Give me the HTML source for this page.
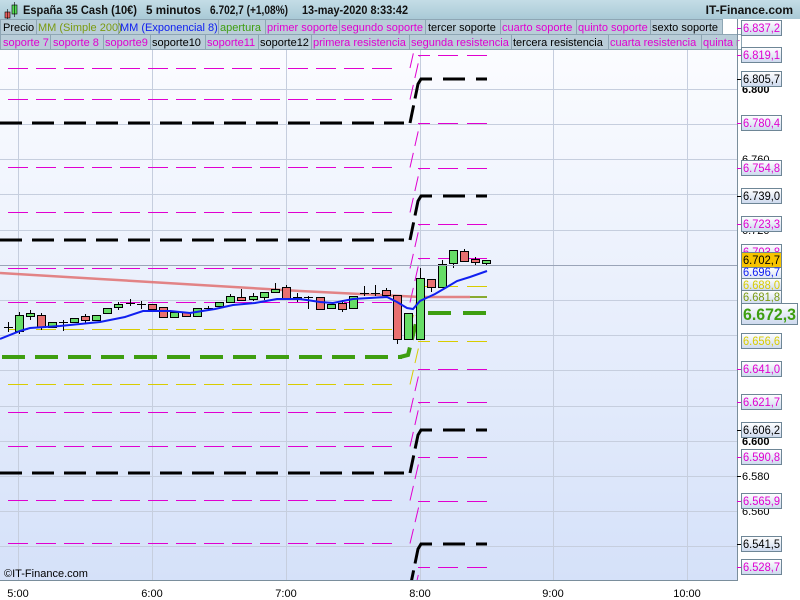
<!DOCTYPE html>
<html><head><meta charset="utf-8"><style>
html,body{margin:0;padding:0;width:800px;height:600px;overflow:hidden;background:#fff}
svg{display:block;font-family:"Liberation Sans",sans-serif}
</style></head><body>
<svg width="800" height="600" viewBox="0 0 800 600" xmlns="http://www.w3.org/2000/svg">
<defs>
<linearGradient id="bg" x1="0" y1="0" x2="0" y2="1"><stop offset="0" stop-color="#fbfcff"/><stop offset="1" stop-color="#d5e1f9"/></linearGradient>
<linearGradient id="hd" x1="0" y1="0" x2="0" y2="1"><stop offset="0" stop-color="#c4dde6"/><stop offset="1" stop-color="#a9c9d6"/></linearGradient>
<linearGradient id="bx" x1="0" y1="0" x2="0" y2="1"><stop offset="0" stop-color="#ffffff"/><stop offset="1" stop-color="#cdd9ee"/></linearGradient>
<clipPath id="pc"><rect x="0" y="50" width="737" height="530"/></clipPath>
</defs>
<rect x="0" y="50" width="737" height="530" fill="url(#bg)"/>
<g clip-path="url(#pc)">
<g stroke="#c6cede" stroke-width="1">
<line x1="18.5" y1="50" x2="18.5" y2="580"/><line x1="152.5" y1="50" x2="152.5" y2="580"/><line x1="286.5" y1="50" x2="286.5" y2="580"/><line x1="420.5" y1="50" x2="420.5" y2="580"/><line x1="553.5" y1="50" x2="553.5" y2="580"/><line x1="687.5" y1="50" x2="687.5" y2="580"/>
<line x1="0" y1="89.5" x2="737" y2="89.5"/><line x1="0" y1="124.5" x2="737" y2="124.5"/><line x1="0" y1="159.5" x2="737" y2="159.5"/><line x1="0" y1="194.5" x2="737" y2="194.5"/><line x1="0" y1="230.5" x2="737" y2="230.5"/><line x1="0" y1="265.5" x2="737" y2="265.5"/><line x1="0" y1="300.5" x2="737" y2="300.5"/><line x1="0" y1="335.5" x2="737" y2="335.5"/><line x1="0" y1="370.5" x2="737" y2="370.5"/><line x1="0" y1="406.5" x2="737" y2="406.5"/><line x1="0" y1="441.5" x2="737" y2="441.5"/><line x1="0" y1="476.5" x2="737" y2="476.5"/><line x1="0" y1="511.5" x2="737" y2="511.5"/><line x1="0" y1="546.5" x2="737" y2="546.5"/>
</g>
<g fill="none" stroke="#e000d0" stroke-width="1" stroke-dasharray="20 8" stroke-dashoffset="-4">
<line x1="4" y1="68.5" x2="400" y2="68.5"/><line x1="4" y1="99.5" x2="400" y2="99.5"/><line x1="4" y1="167.5" x2="400" y2="167.5"/><line x1="4" y1="212.5" x2="400" y2="212.5"/><line x1="4" y1="268.5" x2="400" y2="268.5"/><line x1="4" y1="302.5" x2="400" y2="302.5"/><line x1="4" y1="412.5" x2="400" y2="412.5"/><line x1="4" y1="446.5" x2="400" y2="446.5"/><line x1="4" y1="500.5" x2="400" y2="500.5"/><line x1="4" y1="543.5" x2="400" y2="543.5"/>
</g>
<g fill="none" stroke="#e000d0" stroke-width="1" stroke-dasharray="12 8 20 9 20">
<polyline points="418,55.5 487,55.5"/><polyline points="418,123.5 487,123.5"/><polyline points="418,168.5 487,168.5"/><polyline points="418,224.5 487,224.5"/><polyline points="418,258.5 487,258.5"/><polyline points="418,369.5 487,369.5"/><polyline points="418,402.5 487,402.5"/><polyline points="418,457.5 487,457.5"/><polyline points="418,501.5 487,501.5"/><polyline points="418,567.5 487,567.5"/>
</g>
<g fill="none" stroke="#e000d0" stroke-width="1" stroke-dasharray="15 7">
<line x1="410" y1="68" x2="420" y2="24"/><line x1="410" y1="99.5" x2="420" y2="55.5"/><line x1="410" y1="167.5" x2="420" y2="123.5"/><line x1="410" y1="212.5" x2="420" y2="168.5"/><line x1="410" y1="268.5" x2="420" y2="224.5"/><line x1="410" y1="302.5" x2="420" y2="258.5"/><line x1="410" y1="412.5" x2="420" y2="369.5"/><line x1="410" y1="446.5" x2="420" y2="402.5"/><line x1="410" y1="500.5" x2="420" y2="457.5"/><line x1="410" y1="543.5" x2="420" y2="501.5"/><line x1="410" y1="611" x2="420" y2="567.5"/>
</g>
<g fill="none" stroke="#d8cc00" stroke-width="1" stroke-dasharray="20 8" stroke-dashoffset="-4">
<line x1="4" y1="329.5" x2="400" y2="329.5"/><line x1="4" y1="384.5" x2="400" y2="384.5"/>
</g>
<g fill="none" stroke="#d8cc00" stroke-width="1" stroke-dasharray="12 8 20 9 20">
<line x1="418" y1="286.5" x2="487" y2="286.5"/><line x1="418" y1="341.5" x2="487" y2="341.5"/>
<line x1="410" y1="384.5" x2="420" y2="341.5" stroke-dasharray="15 7"/><line x1="410" y1="329.5" x2="420" y2="286.5" stroke-dasharray="15 7"/>
</g>
<g fill="none" stroke="#000" stroke-width="3" stroke-dasharray="22 10">
<polyline points="0,123 404,123"/><polyline points="0,240 404,240"/><polyline points="0,473 404,473"/>
<line x1="443" y1="79" x2="487" y2="79" stroke-dasharray="22 11"/><line x1="443" y1="196" x2="487" y2="196" stroke-dasharray="22 11"/><line x1="443" y1="430" x2="487" y2="430" stroke-dasharray="22 11"/><line x1="443" y1="544" x2="487" y2="544" stroke-dasharray="22 11"/>
</g>
<g fill="none" stroke="#000" stroke-width="3" stroke-dasharray="18 7 80">
<polyline points="410,123 418,84 421,79 432,79"/>
<polyline points="410,240 418,201 421,196 432,196"/>
<polyline points="410,473 418,435 421,430 432,430"/>
<polyline points="410,588 418,549 421,544 432,544"/>
</g>
<polyline points="2,357 402,357" fill="none" stroke="#3e9e10" stroke-width="4" stroke-dasharray="23 10"/>
<polyline points="400,357 408,355 418,315" fill="none" stroke="#3e9e10" stroke-width="4" stroke-dasharray="16 8"/>
<line x1="428" y1="313" x2="487" y2="313" stroke="#3e9e10" stroke-width="4" stroke-dasharray="23 12"/>
<polyline points="0,273 100,279 200,285 300,291 380,295 420,297 470,297" fill="none" stroke="#e07070" stroke-width="2.5" stroke-opacity="0.85"/>
<line x1="470" y1="297" x2="487" y2="297" stroke="#88aa30" stroke-width="2"/>
<g stroke="#000" stroke-width="1">
<line x1="8.5" y1="322" x2="8.5" y2="332"/><line x1="4" y1="327.5" x2="13" y2="327.5"/>
<line x1="19.5" y1="312" x2="19.5" y2="334"/><rect x="15.5" y="315.5" width="8" height="16" fill="#66dd66"/>
<line x1="30.5" y1="310" x2="30.5" y2="320"/><rect x="26.5" y="313.5" width="8" height="3" fill="#66dd66"/>
<line x1="41.5" y1="313" x2="41.5" y2="330"/><rect x="37.5" y="315.5" width="8" height="12" fill="#e87070"/>
<rect x="48.5" y="322.5" width="8" height="5" fill="#66dd66"/>
<line x1="63.5" y1="320" x2="63.5" y2="331"/><line x1="59" y1="322.5" x2="68" y2="322.5"/>
<rect x="70.5" y="318.5" width="8" height="4" fill="#66dd66"/>
<line x1="85.5" y1="314" x2="85.5" y2="324"/><rect x="81.5" y="316.5" width="8" height="4" fill="#e87070"/>
<rect x="92.5" y="315.5" width="8" height="5" fill="#66dd66"/>
<rect x="103.5" y="308.5" width="8" height="5" fill="#66dd66"/>
<line x1="118.5" y1="302" x2="118.5" y2="310"/><rect x="114.5" y="304.5" width="8" height="3" fill="#66dd66"/>
<line x1="130.5" y1="299" x2="130.5" y2="306"/><line x1="126" y1="303.5" x2="135" y2="303.5"/>
<line x1="141.5" y1="301" x2="141.5" y2="309"/><line x1="137" y1="304.5" x2="146" y2="304.5"/>
<rect x="148.5" y="304.5" width="8" height="5" fill="#e87070"/>
<rect x="159.5" y="307.5" width="8" height="10" fill="#e87070"/>
<rect x="170.5" y="312.5" width="8" height="5" fill="#66dd66"/>
<rect x="182.5" y="312.5" width="8" height="4" fill="#e87070"/>
<rect x="193.5" y="308.5" width="8" height="8" fill="#66dd66"/>
<line x1="208.5" y1="306" x2="208.5" y2="311"/><line x1="204" y1="308.5" x2="213" y2="308.5"/>
<rect x="215.5" y="302.5" width="8" height="4" fill="#66dd66"/>
<line x1="230.5" y1="294" x2="230.5" y2="303"/><rect x="226.5" y="296.5" width="8" height="6" fill="#66dd66"/>
<line x1="241.5" y1="289" x2="241.5" y2="301"/><rect x="237.5" y="297.5" width="8" height="3" fill="#e87070"/>
<line x1="253.5" y1="293" x2="253.5" y2="301"/><rect x="249.5" y="296.5" width="8" height="3" fill="#66dd66"/>
<line x1="264.5" y1="292" x2="264.5" y2="300"/><rect x="260.5" y="292.5" width="8" height="5" fill="#66dd66"/>
<line x1="275.5" y1="283" x2="275.5" y2="292"/><rect x="271.5" y="289.5" width="8" height="3" fill="#66dd66"/>
<line x1="286.5" y1="285" x2="286.5" y2="300"/><rect x="282.5" y="287.5" width="8" height="12" fill="#e87070"/>
<line x1="297.5" y1="293" x2="297.5" y2="302"/><rect x="293.5" y="297.5" width="8" height="2" fill="#e87070"/>
<line x1="308.5" y1="296" x2="308.5" y2="309"/><line x1="304" y1="297.5" x2="313" y2="297.5"/>
<rect x="316.5" y="297.5" width="8" height="12" fill="#e87070"/>
<rect x="327.5" y="304.5" width="8" height="4" fill="#66dd66"/>
<line x1="342.5" y1="300" x2="342.5" y2="312"/><rect x="338.5" y="303.5" width="8" height="6" fill="#e87070"/>
<rect x="349.5" y="296.5" width="8" height="12" fill="#66dd66"/>
<line x1="364.5" y1="286" x2="364.5" y2="296"/><line x1="360" y1="293.5" x2="369" y2="293.5"/>
<line x1="375.5" y1="285" x2="375.5" y2="296"/><line x1="371" y1="293.5" x2="380" y2="293.5"/>
<line x1="386.5" y1="288" x2="386.5" y2="296"/><rect x="382.5" y="290.5" width="8" height="5" fill="#e87070"/>
<line x1="397.5" y1="295" x2="397.5" y2="344"/><rect x="393.5" y="295.5" width="8" height="44" fill="#e87070"/>
<rect x="404.5" y="313.5" width="8" height="26" fill="#66dd66"/>
<line x1="420.5" y1="268" x2="420.5" y2="340"/><rect x="416.5" y="278.5" width="8" height="61" fill="#66dd66"/>
<line x1="431.5" y1="279" x2="431.5" y2="292"/><rect x="427.5" y="279.5" width="8" height="8" fill="#e87070"/>
<line x1="442.5" y1="260" x2="442.5" y2="288"/><rect x="438.5" y="264.5" width="8" height="23" fill="#66dd66"/>
<line x1="453.5" y1="250" x2="453.5" y2="268"/><rect x="449.5" y="250.5" width="8" height="13" fill="#66dd66"/>
<line x1="464.5" y1="249" x2="464.5" y2="262"/><rect x="460.5" y="251.5" width="8" height="10" fill="#e87070"/>
<line x1="475.5" y1="257" x2="475.5" y2="265"/><rect x="471.5" y="259.5" width="8" height="3" fill="#e87070"/>
<line x1="486.5" y1="260" x2="486.5" y2="266"/><rect x="482.5" y="260.5" width="8" height="3" fill="#66dd66"/>
</g>
<line x1="0" y1="265.5" x2="737" y2="265.5" stroke="#9aa4b8" stroke-width="1"/>
<polyline points="0,339 20,331 30,328 60,326 100,322 125,317 143,311 170,311 190,313 215,309 233,305 255,303 277,299 300,299 320,302 333,303 353,299 387,297 397,302 407,308 413,309 420,301 435,294 447,287 457,281 470,277 487,271" fill="none" stroke="#1020f0" stroke-width="2"/>
<text x="4" y="577" font-size="11" fill="#000">©IT-Finance.com</text>
</g>
<rect x="0" y="0" width="800" height="19" fill="url(#hd)"/>
<rect x="5" y="12" width="5" height="6" fill="#e86060" stroke="#000" stroke-width="0.6"/><line x1="7.5" y1="9" x2="7.5" y2="19" stroke="#000" stroke-width="0.6"/>
<rect x="12" y="5" width="5" height="9" fill="#55dd55" stroke="#000" stroke-width="0.6"/><line x1="14.5" y1="2" x2="14.5" y2="17" stroke="#000" stroke-width="0.6"/>
<g font-size="12" font-weight="bold" fill="#111">
<text x="23" y="14" textLength="114" lengthAdjust="spacingAndGlyphs">España 35 Cash (10€)</text><text x="146" y="14" textLength="55" lengthAdjust="spacingAndGlyphs">5 minutos</text><text x="210" y="14" textLength="78" lengthAdjust="spacingAndGlyphs">6.702,7 (+1,08%)</text><text x="302" y="14" textLength="106" lengthAdjust="spacingAndGlyphs">13-may-2020 8:33:42</text>
<text x="793" y="14" text-anchor="end">IT-Finance.com</text>
</g>
<rect x="0" y="19" width="737" height="31" fill="#b9cdd8"/>
<g fill="none" stroke="#8ea6b4">
<rect x="0.5" y="19.5" width="36" height="15"/><rect x="36.5" y="19.5" width="82" height="15"/><rect x="118.5" y="19.5" width="100" height="15"/><rect x="218.5" y="19.5" width="47" height="15"/><rect x="265.5" y="19.5" width="74" height="15"/><rect x="339.5" y="19.5" width="86" height="15"/><rect x="425.5" y="19.5" width="75" height="15"/><rect x="500.5" y="19.5" width="76" height="15"/><rect x="576.5" y="19.5" width="74" height="15"/><rect x="650.5" y="19.5" width="72" height="15"/>
<rect x="0.5" y="34.5" width="50" height="15"/><rect x="50.5" y="34.5" width="53" height="15"/><rect x="103.5" y="34.5" width="47" height="15"/><rect x="150.5" y="34.5" width="55" height="15"/><rect x="205.5" y="34.5" width="53" height="15"/><rect x="258.5" y="34.5" width="53" height="15"/><rect x="311.5" y="34.5" width="98" height="15"/><rect x="409.5" y="34.5" width="102" height="15"/><rect x="511.5" y="34.5" width="97" height="15"/><rect x="608.5" y="34.5" width="93" height="15"/><rect x="701.5" y="34.5" width="40" height="15"/>
</g>
<rect x="723" y="19" width="14" height="15" fill="#fff"/>
<g font-size="11">
<text x="3" y="31" fill="#000">Precio</text><text x="38" y="31" fill="#7a9a10">MM (Simple 200)</text><text x="120" y="31" fill="#1020f0">MM (Exponencial 8)</text><text x="220" y="31" fill="#3e9e10">apertura</text><text x="267" y="31" fill="#e000d0">primer soporte</text><text x="341" y="31" fill="#e000d0">segundo soporte</text><text x="428" y="31" fill="#000">tercer soporte</text><text x="502" y="31" fill="#e000d0">cuarto soporte</text><text x="578" y="31" fill="#e000d0">quinto soporte</text><text x="652" y="31" fill="#000">sexto soporte</text>
<text x="3" y="46" fill="#e000d0">soporte 7</text><text x="53" y="46" fill="#e000d0">soporte 8</text><text x="105" y="46" fill="#e000d0">soporte9</text><text x="152" y="46" fill="#000">soporte10</text><text x="207" y="46" fill="#e000d0">soporte11</text><text x="260" y="46" fill="#000">soporte12</text><text x="313" y="46" fill="#e000d0">primera resistencia</text><text x="411" y="46" fill="#e000d0">segunda resistencia</text><text x="513" y="46" fill="#000">tercera resistencia</text><text x="610" y="46" fill="#e000d0">cuarta resistencia</text><text x="703" y="46" fill="#e000d0">quinta r</text>
</g>
<rect x="737" y="50" width="63" height="550" fill="#fff"/>
<rect x="0" y="580" width="737" height="20" fill="#fff"/>
<line x1="737.5" y1="19" x2="737.5" y2="581" stroke="#7a8e9c"/>
<line x1="0" y1="580.5" x2="737" y2="580.5" stroke="#7a8e9c"/>
<g font-size="11" fill="#000" text-anchor="middle">
<text x="18" y="597">5:00</text><text x="152" y="597">6:00</text><text x="286" y="597">7:00</text><text x="420" y="597">8:00</text><text x="553" y="597">9:00</text><text x="687" y="597">10:00</text>
</g>
<g font-size="11" fill="#000">
<text x="742" y="93" font-weight="bold">6.800</text><text x="742" y="163">6.760</text><text x="742" y="234">6.720</text><text x="742" y="304">6.680</text><text x="742" y="374">6.640</text><text x="742" y="445" font-weight="bold">6.600</text><text x="742" y="480">6.580</text><text x="742" y="515">6.560</text>
<line x1="737" y1="476.5" x2="741" y2="476.5" stroke="#000"/>
</g>
<g font-size="11.5">
<g fill="url(#bx)" stroke="#6e8696">
<rect x="741.5" y="20.5" width="40" height="15"/><rect x="741.5" y="47.5" width="40" height="15"/><rect x="741.5" y="71.5" width="40" height="15"/><rect x="741.5" y="115.5" width="40" height="15"/><rect x="741.5" y="160.5" width="40" height="15"/><rect x="741.5" y="188.5" width="40" height="15"/><rect x="741.5" y="216.5" width="40" height="15"/><rect x="741.5" y="244.5" width="40" height="15"/>
<rect x="741.5" y="333.5" width="40" height="15"/><rect x="741.5" y="361.5" width="40" height="15"/><rect x="741.5" y="394.5" width="40" height="15"/><rect x="741.5" y="422.5" width="40" height="15"/><rect x="741.5" y="449.5" width="40" height="15"/><rect x="741.5" y="493.5" width="40" height="15"/><rect x="741.5" y="536.5" width="40" height="15"/><rect x="741.5" y="559.5" width="40" height="15"/>
</g>
<g stroke-width="1">
<line x1="737" y1="28.5" x2="741" y2="28.5" stroke="#e000d0"/><line x1="737" y1="55.5" x2="741" y2="55.5" stroke="#e000d0"/><line x1="737" y1="79.5" x2="741" y2="79.5" stroke="#000"/><line x1="737" y1="123.5" x2="741" y2="123.5" stroke="#e000d0"/><line x1="737" y1="168.5" x2="741" y2="168.5" stroke="#e000d0"/><line x1="737" y1="196.5" x2="741" y2="196.5" stroke="#000"/><line x1="737" y1="224.5" x2="741" y2="224.5" stroke="#e000d0"/><line x1="737" y1="369.5" x2="741" y2="369.5" stroke="#e000d0"/><line x1="737" y1="402.5" x2="741" y2="402.5" stroke="#e000d0"/><line x1="737" y1="430.5" x2="741" y2="430.5" stroke="#000"/><line x1="737" y1="457.5" x2="741" y2="457.5" stroke="#e000d0"/><line x1="737" y1="501.5" x2="741" y2="501.5" stroke="#e000d0"/><line x1="737" y1="544.5" x2="741" y2="544.5" stroke="#000"/><line x1="737" y1="567.5" x2="741" y2="567.5" stroke="#e000d0"/>
</g>
<text x="743" y="32" fill="#e000d0" textLength="37" lengthAdjust="spacingAndGlyphs">6.837,2</text><text x="743" y="59" fill="#e000d0" textLength="37" lengthAdjust="spacingAndGlyphs">6.819,1</text><text x="743" y="83" fill="#000" textLength="37" lengthAdjust="spacingAndGlyphs">6.805,7</text><text x="743" y="127" fill="#e000d0" textLength="37" lengthAdjust="spacingAndGlyphs">6.780,4</text><text x="743" y="172" fill="#e000d0" textLength="37" lengthAdjust="spacingAndGlyphs">6.754,8</text><text x="743" y="200" fill="#000" textLength="37" lengthAdjust="spacingAndGlyphs">6.739,0</text><text x="743" y="228" fill="#e000d0" textLength="37" lengthAdjust="spacingAndGlyphs">6.723,3</text><text x="743" y="256" fill="#e000d0" textLength="37" lengthAdjust="spacingAndGlyphs">6.703,8</text>
<rect x="741.5" y="252.5" width="40" height="15" fill="#f8c400" stroke="#6e8696"/>
<text x="743" y="264" fill="#000" textLength="37" lengthAdjust="spacingAndGlyphs">6.702,7</text>
<rect x="741.5" y="267.5" width="40" height="15" fill="url(#bx)" stroke="#6e8696"/><text x="743" y="276" fill="#1020f0" textLength="37" lengthAdjust="spacingAndGlyphs">6.696,7</text>
<rect x="741.5" y="278.5" width="40" height="12" fill="url(#bx)" stroke="#6e8696"/><text x="743" y="289" fill="#d8cc00" textLength="37" lengthAdjust="spacingAndGlyphs">6.688,0</text>
<rect x="741.5" y="290.5" width="40" height="14" fill="url(#bx)" stroke="#6e8696"/><text x="743" y="301" fill="#7a9a10" textLength="37" lengthAdjust="spacingAndGlyphs">6.681,8</text>
<rect x="741.5" y="303.5" width="56" height="21" fill="url(#bx)" stroke="#6e8696"/>
<text x="743" y="320" fill="#3e9e10" font-size="17" font-weight="bold" textLength="53" lengthAdjust="spacingAndGlyphs">6.672,3</text>
<text x="743" y="345" fill="#d8cc00" textLength="37" lengthAdjust="spacingAndGlyphs">6.656,6</text><text x="743" y="373" fill="#e000d0" textLength="37" lengthAdjust="spacingAndGlyphs">6.641,0</text><text x="743" y="406" fill="#e000d0" textLength="37" lengthAdjust="spacingAndGlyphs">6.621,7</text><text x="743" y="434" fill="#000" textLength="37" lengthAdjust="spacingAndGlyphs">6.606,2</text><text x="743" y="461" fill="#e000d0" textLength="37" lengthAdjust="spacingAndGlyphs">6.590,8</text><text x="743" y="505" fill="#e000d0" textLength="37" lengthAdjust="spacingAndGlyphs">6.565,9</text><text x="743" y="548" fill="#000" textLength="37" lengthAdjust="spacingAndGlyphs">6.541,5</text><text x="743" y="571" fill="#e000d0" textLength="37" lengthAdjust="spacingAndGlyphs">6.528,7</text>
</g>
</svg>
</body></html>
